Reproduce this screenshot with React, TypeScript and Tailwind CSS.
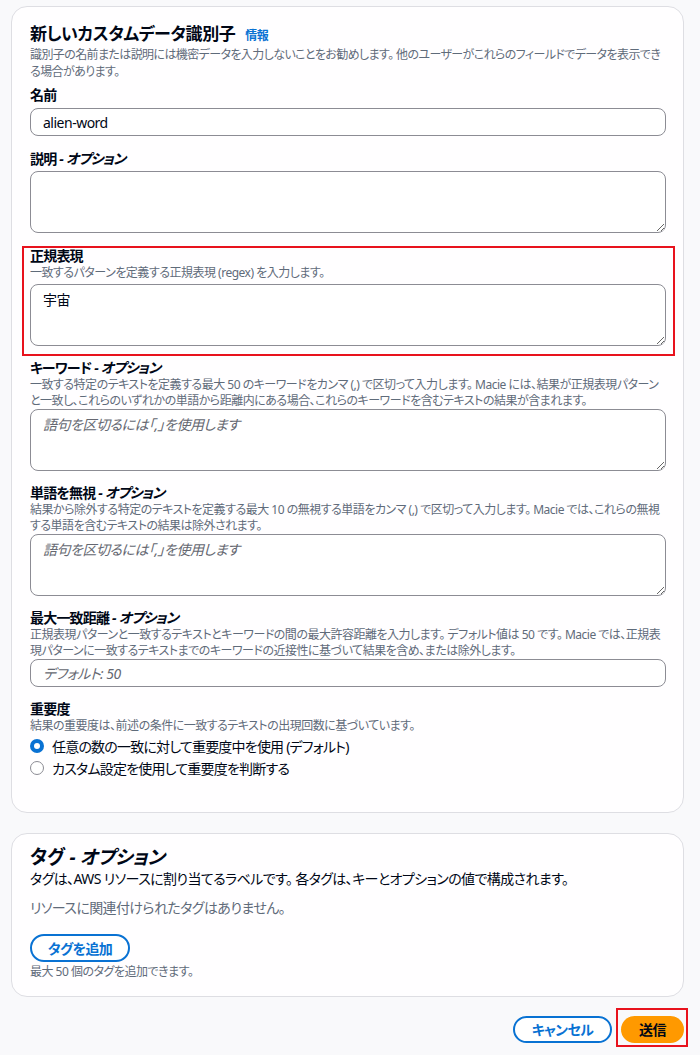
import React from 'react';

const FONT = '"Noto Sans", "Noto Sans CJK JP", sans-serif';

const Label: React.FC<{ text: string; optional?: boolean }> = ({ text, optional }) => (
  <div className="text-[14px] font-bold leading-[18px] tracking-[-0.8px] text-[#000716]">
    {text}
    {optional && <span className="italic"> - オプション</span>}
  </div>
);

const Desc: React.FC<{ lines: string[] }> = ({ lines }) => (
  <div className="whitespace-nowrap text-[12px] leading-4 tracking-[-0.5px] text-[#5f6b7a]">
    {lines.map((l, i) => (
      <div key={i}>{l}</div>
    ))}
  </div>
);

const inputCls =
  'block w-full rounded-lg border border-[#8c8c94] bg-white px-3 text-[14px] tracking-[-0.5px] text-[#000716] outline-none placeholder:italic placeholder:text-[#656871]';

const TextInput: React.FC<{ value?: string; placeholder?: string; top: string }> = ({ value, placeholder, top }) => (
  <input
    className={`${inputCls} ${top} h-[28px]`}
    defaultValue={value}
    placeholder={placeholder}
    style={{ fontFamily: FONT }}
  />
);

const TextArea: React.FC<{ value?: string; placeholder?: string; top: string }> = ({ value, placeholder, top }) => (
  <textarea
    className={`${inputCls} ${top} h-[62px] py-1`}
    defaultValue={value}
    placeholder={placeholder}
    style={{ fontFamily: FONT }}
  />
);

const Radio: React.FC<{ checked?: boolean; label: string }> = ({ checked, label }) => (
  <label className="flex h-[22px] items-center gap-2 text-[14px] tracking-[-0.8px] text-[#000716]">
    {checked ? (
      <span className="flex h-[14px] w-[14px] items-center justify-center rounded-full bg-[#0972d3]">
        <span className="h-[6px] w-[6px] rounded-full bg-white" />
      </span>
    ) : (
      <span className="h-[14px] w-[14px] rounded-full border-[1.5px] border-[#8c8c94] bg-white" />
    )}
    {label}
  </label>
);

const App: React.FC = () => {
  return (
    <div
      className="min-h-screen bg-[#f9f9fb] pb-4 pl-[11px] pr-[16px] pt-[6px] [font-feature-settings:'palt']"
      style={{ fontFamily: FONT }}
    >
      {/* identifier card */}
      <div className="rounded-2xl border border-[#dedee3] bg-[#fffeff] pb-[33px] pl-[18px] pr-[17px] pt-[15px]">
        <div className="flex items-baseline gap-[10px]">
          <h1 className="text-[17px] font-bold leading-6 tracking-[-0.4px] text-[#000716]">新しいカスタムデータ識別子</h1>
          <a className="text-[12px] font-bold tracking-[-0.5px] text-[#0972d3]">情報</a>
        </div>
        <div className="whitespace-nowrap text-[12px] leading-[17px] tracking-[-0.6px] text-[#5f6b7a]">
          <div>識別子の名前または説明には機密データを入力しないことをお勧めします。 他のユーザーがこれらのフィールドでデータを表示でき</div>
          <div>る場合があります。</div>
        </div>

        <div className="mt-[6px] flex flex-col gap-[13px]">
          <div>
            <Label text="名前" />
            <TextInput value="alien-word" top="mt-1" />
          </div>

          <div className="mt-[1px]">
            <Label text="説明" optional />
            <TextArea top="mt-[3px]" />
          </div>

          <div className="relative mt-[1px]">
            <div className="pointer-events-none absolute -bottom-[10px] -left-[8px] -right-[9px] -top-[1px] border-[2.5px] border-[#e8121d]" />
            <Label text="正規表現" />
            <Desc lines={['一致するパターンを定義する正規表現 (regex) を入力します。']} />
            <TextArea value="宇宙" top="mt-[3px]" />
          </div>

          <div>
            <Label text="キーワード" optional />
            <Desc
              lines={[
                '一致する特定のテキストを定義する最大 50 のキーワードをカンマ (,) で区切って入力します。 Macie には、結果が正規表現パターン',
                'と一致し、これらのいずれかの単語から距離内にある場合、これらのキーワードを含むテキストの結果が含まれます。',
              ]}
            />
            <TextArea placeholder="語句を区切るには「,」を使用します" top="mt-0" />
          </div>

          <div>
            <Label text="単語を無視" optional />
            <Desc
              lines={[
                '結果から除外する特定のテキストを定義する最大 10 の無視する単語をカンマ (,) で区切って入力します。 Macie では、これらの無視',
                'する単語を含むテキストの結果は除外されます。',
              ]}
            />
            <TextArea placeholder="語句を区切るには「,」を使用します" top="mt-0" />
          </div>

          <div>
            <Label text="最大一致距離" optional />
            <Desc
              lines={[
                '正規表現パターンと一致するテキストとキーワードの間の最大許容距離を入力します。 デフォルト値は 50 です。 Macie では、正規表',
                '現パターンに一致するテキストまでのキーワードの近接性に基づいて結果を含め、または除外します。',
              ]}
            />
            <TextInput placeholder="デフォルト: 50" top="mt-0" />
          </div>

          <div>
            <Label text="重要度" />
            <Desc lines={['結果の重要度は、前述の条件に一致するテキストの出現回数に基づいています。']} />
            <div className="mt-[1px]">
              <Radio checked label="任意の数の一致に対して重要度中を使用 (デフォルト)" />
              <Radio label="カスタム設定を使用して重要度を判断する" />
            </div>
          </div>
        </div>
      </div>

      {/* tags card */}
      <div className="mt-5 rounded-2xl border border-[#dedee3] bg-[#fffeff] pb-[16px] pl-[18px] pr-[17px] pt-[11px]">
        <h2 className="text-[19px] font-bold leading-6 tracking-[-0.3px] text-[#000716]">
          タグ<span className="italic"> - オプション</span>
        </h2>
        <p className="text-[14px] leading-5 tracking-[-0.6px] text-[#000716]">
          タグは、AWS リソースに割り当てるラベルです。 各タグは、キーとオプションの値で構成されます。
        </p>
        <p className="mt-[9px] text-[14px] leading-5 tracking-[-0.6px] text-[#5f6b7a]">リソースに関連付けられたタグはありません。</p>
        <button className="mt-4 h-[28px] w-[100px] rounded-full border-2 border-[#0972d3] bg-white text-[14px] font-bold tracking-[-0.6px] text-[#0972d3]">
          タグを追加
        </button>
        <div className="mt-[2px] text-[12px] leading-4 tracking-[-0.5px] text-[#5f6b7a]">最大 50 個のタグを追加できます。</div>
      </div>

      {/* footer */}
      <div className="mt-[19px] flex justify-end gap-[9px]">
        <button className="h-[27px] w-[99px] rounded-full border-2 border-[#0972d3] bg-white text-[14px] font-bold tracking-[-0.6px] text-[#0972d3]">
          キャンセル
        </button>
        <div className="relative">
          <div className="pointer-events-none absolute -bottom-[4px] -left-[5px] -right-[4px] -top-[8px] border-[2.5px] border-[#e8121d]" />
          <button className="h-[27px] w-[63px] rounded-full bg-[#ff9900] text-[14px] font-bold tracking-[-0.6px] text-[#000716]">
            送信
          </button>
        </div>
      </div>
    </div>
  );
};

export default App;
